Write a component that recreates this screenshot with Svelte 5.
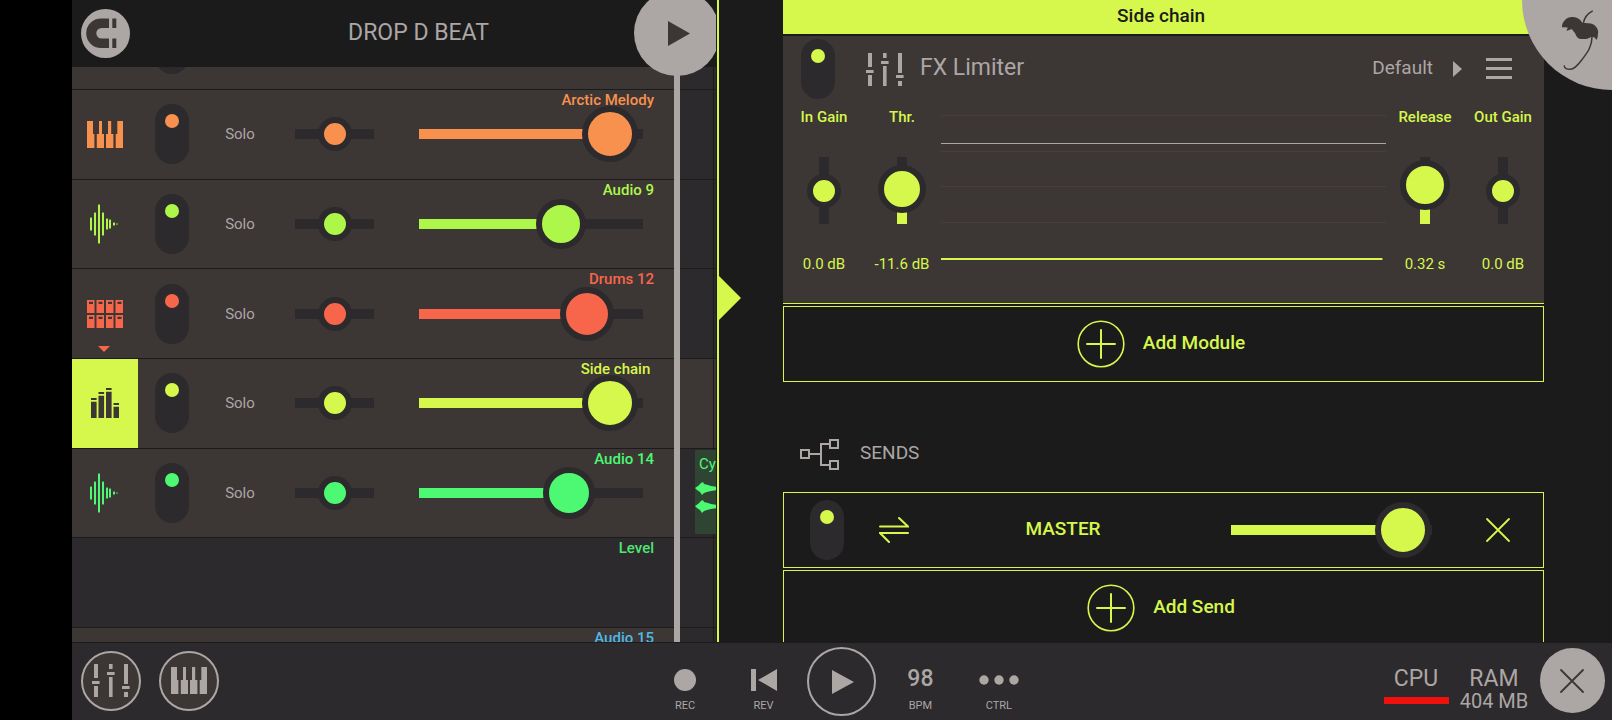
<script>
  const tracks = [
    { name: 'Arctic Melody', color: '#f8914e', icon: 'piano', volume: 97, knob: 56 },
    { name: 'Audio 9', color: '#adf74b', icon: 'wave', volume: 67, knob: 50 },
    { name: 'Drums 12', color: '#f7664b', icon: 'pads', volume: 83, knob: 54, folder: true },
    { name: 'Side chain ', color: '#d6f74b', icon: 'bus', volume: 97, knob: 56, selected: true },
    { name: 'Audio 14', color: '#4df872', icon: 'wave', volume: 72, knob: 52, clip: 'Cy' }
  ];
  const left = [
    { name: 'In Gain', value: 50, text: '0.0 dB', knob: 34, fill: false },
    { name: 'Thr.', value: 57, text: '-11.6 dB', knob: 48, fill: true }
  ];
  const right = [
    { name: 'Release', value: 84, text: '0.32 s', knob: 50, fill: true },
    { name: 'Out Gain', value: 50, text: '0.0 dB', knob: 34, fill: false }
  ];
  const wave = [[4, 13], [8, 23], [12, 39], [16, 23], [20, 11], [23, 9], [27, 3], [30, 1]];
  const bus = [[0, 10], [7.5, 4], [15, 0], [22.5, 15]];
</script>

{#snippet piano()}
  <svg width="36" height="27" viewBox="0 0 36 27" fill="currentColor" aria-hidden="true">
    <path d="M0 0H6V13H7.4V27H0ZM12 0H15V13H17V27H9.8V13H12ZM21 0H24.2V13H26.4V27H19V13H21ZM30.3 0H36V27H28.7V13H30.3Z" />
  </svg>
{/snippet}

{#snippet mixer()}
  <svg width="38" height="33" viewBox="0 0 38 33" fill="currentColor" aria-hidden="true">
    <path d="M2 0h4v14H2zM0 17h7.6v3H0zM2 22h4v11H2zM17 0h3.6v5H17zM15 8h7.6v3H15zM17 13h3.6v20H17zM32 0h4v20h-4zM30 22h7.6v3H30zM32 28h4v5h-4z" />
  </svg>
{/snippet}

{#snippet plus()}
  <svg width="48" height="48" viewBox="0 0 48 48" fill="none" stroke="currentColor" stroke-width="1.6" aria-hidden="true">
    <circle cx="24" cy="24" r="22.8" />
    <path d="M24 10V38M10 24H38" stroke-width="2" stroke-linecap="round" />
  </svg>
{/snippet}

{#snippet cross()}
  <svg width="26" height="26" viewBox="0 0 26 26" fill="none" stroke="currentColor" stroke-width="1.8" stroke-linecap="round" aria-hidden="true">
    <path d="M2 2L24 24M24 2L2 24" />
  </svg>
{/snippet}

{#snippet param(p)}
  <label class="param">
    <span>{p.name}</span>
    <input class="slider vertical" type="range" value={p.value} style="--v:{p.fill ? p.value : 0}%;--k:{p.knob}px" />
    <span class="value">{p.text}</span>
  </label>
{/snippet}

<div class="app">
  <main>
    <section class="playlist" aria-label="Playlist">
      <header>
        <button class="snap" aria-label="Snap">
          <svg width="49" height="49" viewBox="0 0 49 49" fill="currentColor" aria-hidden="true">
            <path d="M28 9.4H20a14.8 14.8 0 0 0 0 29.6H28V29.5H20.5a5.2 5.2 0 0 1 0-10.4H28ZM31.3 9.4h4V19h-4ZM31.3 29.5h4V39h-4Z" />
          </svg>
        </button>
        <h1>DROP D BEAT</h1>
      </header>

      <div class="rows">
        <div class="row"><i class="stub"></i></div>
        {#each tracks as t}
          <div class="row" style="--c:{t.color}">
            <button class="kind" class:selected={t.selected} aria-label="{t.name} track">
              {#if t.icon === 'piano'}
                {@render piano()}
              {:else if t.icon === 'wave'}
                <svg width="36" height="40" viewBox="0 0 36 40" fill="currentColor" aria-hidden="true">
                  {#each wave as [x, h]}
                    <rect x={x - 1} y={20 - h / 2} width="2" height={h} rx="0.5" />
                  {/each}
                </svg>
              {:else if t.icon === 'pads'}
                <svg width="36" height="28" viewBox="0 0 36 28" fill="currentColor" fill-rule="evenodd" aria-hidden="true">
                  {#each [0, 9.5, 19, 28.5] as x}
                    {#each [0, 15] as y}
                      <path d="M{x} {y}h7.5v13h-7.5zM{x + 2} {y + 1.7}v2.3h4v-2.3z" />
                    {/each}
                  {/each}
                </svg>
              {:else}
                <svg width="28" height="30" viewBox="0 0 28 30" fill="currentColor" aria-hidden="true">
                  {#each bus as [x, y]}
                    <path d="M{x} {y}h5.6v2h-5.6zM{x} {y + 3.8}h5.6V30h-5.6z" />
                  {/each}
                </svg>
              {/if}
              {#if t.folder}<i class="fold"></i>{/if}
            </button>
            <input class="toggle" type="checkbox" checked aria-label="{t.name} on" />
            <button class="solo">Solo</button>
            <input class="slider pan" type="range" value="50" style="--k:34px" aria-label="{t.name} pan" />
            <input class="slider volume" type="range" value={t.volume} style="--v:{t.volume}%;--k:{t.knob}px" aria-label="{t.name} volume" />
            <span class="name">{t.name}</span>
            <div class="lane" class:lit={t.selected}>
              {#if t.clip}
                <div class="clip">
                  <span>{t.clip}</span>
                  <svg width="60" height="32" viewBox="0 0 60 32" fill="currentColor" aria-hidden="true">
                    <path d="M0 6L3 4L6 1L8 0L9 2L13 3L16 4L22 5H60V8L22 8L16 9L12 10L9 11L7 13L5 10L2 8Z" />
                    <path d="M0 24L3 22L6 19L8 18L9 20L13 21L16 22L22 23H60V26L22 26L16 27L12 28L9 29L7 31L5 28L2 26Z" />
                  </svg>
                </div>
              {/if}
            </div>
          </div>
        {/each}
        <div class="row automation" style="--c:#4fe574">
          <span class="name">Level</span>
        </div>
        <div class="row last" style="--c:#4fb9e6">
          <span class="name">Audio 15</span>
        </div>
      </div>
      <i class="playhead"></i>
      <button class="marker" aria-label="Play from here">
        <svg width="22" height="25" viewBox="0 0 22 25" fill="currentColor" aria-hidden="true"><path d="M0 0L22 12.5L0 25Z" /></svg>
      </button>
    </section>

    <section class="rack" aria-label="Effects">
      <i class="arrow"></i>
      <h2>{'Side chain '}</h2>
      <article class="module">
        <div class="module-head">
          <input class="toggle" type="checkbox" checked aria-label="FX Limiter on" />
          {@render mixer()}
          <h3>FX Limiter</h3>
          <button class="preset">
            <span>Default</span>
            <svg width="9" height="16" viewBox="0 0 9 16" fill="currentColor" aria-hidden="true"><path d="M0 0L9 8L0 16Z" /></svg>
          </button>
          <button class="menu" aria-label="Menu">
            <svg width="26" height="22" viewBox="0 0 26 22" fill="currentColor" aria-hidden="true"><path d="M0 0h26v3H0zM0 9h26v3H0zM0 18h26v3H0z" /></svg>
          </button>
        </div>
        <div class="params">
          {#each left as p}{@render param(p)}{/each}
          <svg class="graph" width="100%" height="148" aria-hidden="true">
            {#each [3, 39, 74, 110] as y}
              <rect x="0" {y} width="100%" height="1" fill="#463f3e" />
            {/each}
            <rect x="0" y="31" width="100%" height="1" fill="#aca6a5" />
            <rect x="0" y="146" width="99.2%" height="2" fill="#d6f74b" />
          </svg>
          {#each right as p}{@render param(p)}{/each}
        </div>
      </article>
      <button class="add">{@render plus()}<span>Add Module</span></button>

      <div class="sends">
        <svg width="40" height="32" viewBox="0 0 40 32" fill="none" stroke="currentColor" stroke-width="2" aria-hidden="true">
          <rect x="1" y="11" width="8" height="8" /><rect x="30" y="1" width="8" height="8" /><rect x="30" y="22" width="8" height="8" />
          <path d="M9 15H21M30 5H21V26H30" />
        </svg>
        <h3>SENDS</h3>
      </div>
      <div class="send">
        <input class="toggle" type="checkbox" checked aria-label="Send on" />
        <svg width="30" height="26" viewBox="0 0 30 26" fill="none" stroke="currentColor" stroke-width="2" stroke-linecap="round" aria-hidden="true">
          <path d="M1 9.5H29L20 1M29 16H1L10 25" />
        </svg>
        <span class="target">MASTER</span>
        <input class="slider amount" type="range" value="99" style="--v:99%;--k:56px" aria-label="Send amount" />
        <button class="remove" aria-label="Remove send">{@render cross()}</button>
      </div>
      <button class="add">{@render plus()}<span>Add Send</span></button>
    </section>
  </main>

  <footer>
    <div class="modes">
      <button aria-label="Mixer">{@render mixer()}</button>
      <button aria-label="Keyboard">{@render piano()}</button>
    </div>
    <div class="transport">
      <button>
        <svg width="22" height="22" viewBox="0 0 22 22" fill="currentColor" aria-hidden="true"><circle cx="11" cy="11" r="11" /></svg>
        <span>REC</span>
      </button>
      <button>
        <svg width="26" height="22" viewBox="0 0 26 22" fill="currentColor" aria-hidden="true"><path d="M0 0h5v22H0zM26 0V22L7 11Z" /></svg>
        <span>REV</span>
      </button>
      <button class="play" aria-label="Play">
        <svg width="22" height="24" viewBox="0 0 22 24" fill="currentColor" aria-hidden="true"><path d="M0 0L22 12L0 24Z" /></svg>
      </button>
      <button><b>98</b><span>BPM</span></button>
      <button>
        <svg width="40" height="22" viewBox="0 0 40 22" fill="currentColor" aria-hidden="true"><circle cx="5" cy="11" r="4.7" /><circle cx="20" cy="11" r="4.7" /><circle cx="35" cy="11" r="4.7" /></svg>
        <span>CTRL</span>
      </button>
    </div>
    <div class="status">
      <div class="meter">CPU<i></i></div>
      <div class="meter">RAM<small>404 MB</small></div>
      <button class="close" aria-label="Close">{@render cross()}</button>
    </div>
  </footer>

  <button class="logo" aria-label="Main menu">
    <svg width="38" height="62" viewBox="0 0 38 62" fill="none" stroke="currentColor" aria-hidden="true">
      <path d="M31.3 1.2Q24 5 22.3 13M31 27C31 37 26 43 20.7 50C17 55 13 59.5 9 59.3C6 59.3 3.5 58 3.3 56" stroke-width="1.5" stroke-linecap="round" />
      <path d="M1 17.3C1 15 1.5 13 3 11.3C4.5 9 6.5 7.5 9 7.3C11.5 6.7 14 7 15.7 7.7C18.5 8.5 20.5 11 21.3 12.9C23 13 25 13 27.3 13.2C31 13.3 33.5 14.5 35 16.7C37 19 37.5 21.5 37 23.5C36.7 26 36.7 28 35.7 29.7C34.3 29.5 34.5 28 33.7 27.5C32.5 26.5 31.5 27 30 27.1C27.5 29 25 29 22.3 29.1C20 29.2 17.500 29 16.3 27.3C14.5 25.5 15 24 13.3 22.3C12 21.3 12.5 20 10.7 19.2C9 19 7.5 20.5 5.7 20.7C5.5 19.5 6.3 19 7 17.8C5 17.5 3 17.8 1 17.3Z" fill="currentColor" stroke="none" />
    </svg>
  </button>
</div>

<style>
  :global(body) {
    background: #000;
  }
  * {
    box-sizing: border-box;
  }
  .app {
    --lime: #d6f74b;
    --gray: #aca6a5;
    --dark: #2c2a2c;
    --panel: #3c3635;
    --ink: #1b1b1b;
    position: relative;
    height: 100vh;
    padding-left: 72px;
    display: grid;
    grid-template-rows: minmax(0, 1fr) 78px;
    overflow: hidden;
    color: var(--gray);
    font: 500 15px/18px Roboto, 'Noto Sans', sans-serif;
  }
  h1, h2, h3 {
    margin: 0;
    font-weight: 500;
  }
  button {
    padding: 0;
    border: 0;
    background: none;
    color: inherit;
    font: inherit;
  }
  svg {
    display: block;
    flex: none;
  }
  main {
    display: grid;
    grid-template-columns: minmax(0, 645fr) minmax(0, 895fr);
    min-height: 0;
    background: var(--ink);
  }

  .toggle {
    appearance: none;
    flex: none;
    width: 34px;
    height: 60px;
    margin: 0;
    padding: 10px;
    border-radius: 17px;
    background: var(--dark);
  }
  .toggle::before {
    content: '';
    display: block;
    height: 14px;
    border-radius: 50%;
    background: var(--c);
  }
  .slider {
    appearance: none;
    min-width: 0;
    height: 56px;
    margin: 0;
    background: linear-gradient(to right, var(--c) var(--v, 0%), var(--dark) var(--v, 0%)) center / 100% 10px no-repeat;
  }
  .slider::-webkit-slider-thumb {
    appearance: none;
    width: var(--k);
    height: var(--k);
    border: 6px solid var(--dark);
    border-radius: 50%;
    background: var(--c);
  }
  .vertical {
    writing-mode: vertical-lr;
    direction: rtl;
    width: 56px;
    height: 67px;
    background: linear-gradient(to top, var(--c) var(--v), var(--dark) var(--v)) center / 10px 100% no-repeat;
  }

  .playlist {
    position: relative;
    display: grid;
    grid-template-rows: 67px minmax(0, 1fr);
    padding-right: 1px;
    overflow: clip;
    overflow-clip-margin: content-box;
  }
  header {
    display: flex;
    align-items: center;
    padding: 0 9px;
  }
  .snap {
    border-radius: 50%;
    background: var(--gray);
    color: var(--panel);
  }
  h1 {
    flex: 1;
    padding-bottom: 2px;
    text-align: center;
    font-size: 23px;
    font-weight: 400;
    line-height: 28px;
  }
  .rows {
    display: grid;
    grid-template-rows: 23px repeat(6, minmax(0, 1fr)) 14px;
    min-height: 0;
  }
  .row {
    display: grid;
    grid-template-columns: 66px 68px 68px 121px minmax(0, 1fr) 42px;
    grid-template-rows: minmax(0, 1fr);
    align-items: center;
    justify-items: center;
    border-bottom: 1px solid var(--ink);
    background: linear-gradient(var(--ink), var(--ink)) right 2px top / 1px 100% no-repeat,
      linear-gradient(to left, var(--dark) 42px, var(--panel) 42px);
    overflow: hidden;
  }
  .stub {
    grid-area: 1 / 2;
    align-self: start;
    width: 34px;
    height: 60px;
    margin-top: -53px;
    border-radius: 17px;
    background: var(--dark);
  }
  .automation {
    background: linear-gradient(var(--ink), var(--ink)) right 2px top / 1px 100% no-repeat, var(--dark);
  }
  .last {
    border: 0;
  }
  .kind {
    position: relative;
    grid-area: 1 / 1;
    display: grid;
    place-items: center;
    width: 100%;
    height: 100%;
    color: var(--c);
  }
  .selected {
    background: var(--lime);
    color: var(--panel);
  }
  .fold {
    position: absolute;
    left: 26px;
    bottom: 6px;
    border: 6px solid transparent;
    border-top-color: var(--c);
    border-bottom: 0;
  }
  .row .toggle {
    grid-area: 1 / 2;
  }
  .solo {
    grid-area: 1 / 3;
    color: var(--gray);
    font-weight: 400;
  }
  .pan {
    grid-area: 1 / 4;
    width: 79px;
  }
  .volume {
    grid-area: 1 / 5;
    width: calc(100% - 55px);
    justify-self: start;
    margin-left: 24px;
  }
  .name {
    grid-area: 1 / 4 / 2 / 6;
    place-self: start end;
    padding: 1px 20px 0 0;
    white-space: pre;
    color: var(--c);
  }
  .lane {
    grid-area: 1 / 6;
    width: 36px;
    height: 100%;
    justify-self: end;
    padding: 1px 0 3px 15px;
    overflow: hidden;
  }
  .lit {
    background: linear-gradient(var(--ink), var(--ink)) right 2px top / 1px 100% no-repeat, var(--panel);
  }
  .clip {
    height: 100%;
    overflow: hidden;
    background: #2f4432;
    color: var(--c);
  }
  .clip span {
    display: block;
    padding: 5px 0 9px 4px;
    font-weight: 400;
  }
  .playhead {
    position: absolute;
    top: 67px;
    bottom: 0;
    right: 37px;
    width: 6px;
    background: var(--gray);
  }
  .marker {
    position: absolute;
    top: -10px;
    right: -3px;
    display: grid;
    place-items: center;
    width: 86px;
    height: 86px;
    padding-left: 4px;
    border-radius: 50%;
    background: var(--gray);
    color: var(--panel);
  }

  .rack {
    --c: var(--lime);
    position: relative;
    display: grid;
    grid-template-rows: 34px 268px 76px 106px 76px 76px;
    row-gap: 2px;
    padding: 0 68px 0 64px;
    border-left: 2px solid var(--lime);
    overflow: hidden;
    color: var(--lime);
  }
  .arrow {
    position: absolute;
    left: 0;
    top: 276px;
    border: 22px solid transparent;
    border-left-color: var(--lime);
    border-right: 0;
  }
  h2 {
    background: var(--lime);
    color: var(--ink);
    text-align: center;
    white-space: pre;
    font-size: 19px;
    line-height: 31px;
  }
  .module {
    display: grid;
    grid-template-rows: 66px 1fr;
    border-bottom: 1px solid var(--lime);
    background: var(--panel);
  }
  .module-head {
    display: flex;
    align-items: center;
    padding: 0 32px 0 18px;
    color: var(--gray);
  }
  .module-head .toggle {
    margin-right: 31px;
  }
  .module-head h3 {
    margin: 0 auto 2px 16px;
    font-size: 23px;
    line-height: 28px;
    font-weight: 400;
  }
  .preset {
    display: flex;
    align-items: center;
    gap: 20px;
    margin-right: 24px;
    font-size: 19px;
    font-weight: 400;
    line-height: 22px;
  }
  .preset span {
    padding-bottom: 3px;
  }
  .params {
    display: grid;
    grid-template-columns: 78px 78px minmax(0, 1fr) 78px 78px;
    padding: 6px 2px 0;
    align-items: start;
  }
  .param {
    display: grid;
    grid-template-rows: 18px 67px 18px;
    row-gap: 31px;
    justify-items: center;
  }
  .value {
    font-weight: 400;
  }
  .graph {
    margin-top: 4px;
  }
  .add {
    display: flex;
    align-items: center;
    justify-content: center;
    gap: 18px;
    padding-right: 5px;
    border: 1px solid var(--lime);
    font-size: 19px;
    line-height: 22px;
  }
  .add span {
    padding-bottom: 2px;
  }
  .sends {
    display: flex;
    align-items: center;
    gap: 20px;
    padding: 35px 17px 0;
    color: var(--gray);
  }
  .sends h3 {
    padding-bottom: 3px;
    font-size: 19px;
    font-weight: 400;
    line-height: 22px;
  }
  .send {
    display: flex;
    align-items: center;
    border: 1px solid var(--lime);
    padding: 0 32px 0 26px;
  }
  .send .toggle {
    margin-right: 35px;
  }
  .target {
    flex: 1;
    padding: 0 14px 3px 0;
    text-align: center;
    font-size: 19px;
    line-height: 22px;
  }
  .amount {
    width: 201px;
    margin-right: 53px;
  }

  footer {
    display: grid;
    grid-template-columns: 1fr 392px 1fr;
    align-items: center;
    border-top: 1px solid var(--ink);
    background: var(--dark);
  }
  .modes {
    display: flex;
    gap: 18px;
    padding: 0 0 2px 9px;
  }
  .modes button {
    display: grid;
    place-items: center;
    width: 60px;
    height: 60px;
    border: 2px solid var(--gray);
    border-radius: 50%;
    background: var(--panel);
  }
  .transport {
    display: grid;
    grid-template-columns: repeat(5, 1fr);
    align-items: center;
    justify-items: center;
  }
  .transport button {
    display: grid;
    grid-template-rows: 22px 14px;
    row-gap: 8px;
    justify-items: center;
    padding-top: 18px;
    font-size: 11px;
    font-weight: 400;
    line-height: 14px;
  }
  .transport b {
    font-size: 23px;
    font-weight: 500;
    line-height: 20px;
  }
  .transport .play {
    grid-template-rows: auto;
    align-items: center;
    width: 69px;
    height: 69px;
    padding: 0 0 0 2px;
    border: 2px solid var(--gray);
    border-radius: 50%;
  }
  .status {
    display: grid;
    grid-template-columns: repeat(3, 78px);
    justify-content: end;
    align-items: center;
    justify-items: center;
    padding: 0 1px 2px 0;
  }
  .meter {
    display: grid;
    grid-template-rows: 26px 18px;
    align-items: center;
    justify-items: center;
    padding-top: 14px;
    font-size: 23px;
    font-weight: 400;
    line-height: 26px;
  }
  .meter i {
    width: 65px;
    height: 7px;
    background: #f0100c;
  }
  .meter small {
    font-size: 20px;
    line-height: 18px;
  }
  .close {
    display: grid;
    place-items: center;
    width: 65px;
    height: 65px;
    border-radius: 50%;
    background: var(--gray);
    color: var(--panel);
  }
  .logo {
    position: absolute;
    top: 0;
    right: 0;
    display: grid;
    align-content: start;
    width: 90px;
    height: 90px;
    padding: 10px 0 0 39px;
    border-bottom-left-radius: 100%;
    background: var(--gray);
    color: var(--panel);
  }
</style>
